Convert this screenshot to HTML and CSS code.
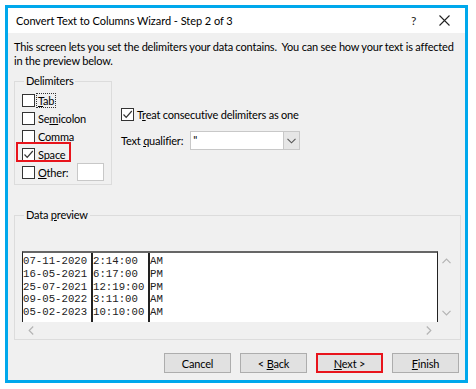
FILE: index.html
```html
<!DOCTYPE html>
<html lang="en">
  <head>
    <meta charset="UTF-8" />
    <title>Convert Text to Columns Wizard</title>
    <link rel="stylesheet" href="styles.css">
  </head>
  <body>
    <div class="dialog">
      <div class="titlebar">
        <span class="title">Convert Text to Columns Wizard - Step 2 of 3</span>
        <span class="help">?</span>
        <span class="close">
          <svg width="11" height="11" viewBox="0 0 11 11"><path d="M0.5 0.5 L10.5 10.5 M10.5 0.5 L0.5 10.5" stroke="#222" stroke-width="1.1" fill="none"/></svg>
        </span>
      </div>

      <div class="content">
        <p class="intro">This screen lets you set the delimiters your data contains.&nbsp; You can see how your text is affected<br>in the preview below.</p>

        <div class="options">
          <fieldset class="group delims">
            <legend>Delimiters</legend>
            <div class="check"><span class="box"></span><span class="focus"><u>T</u>ab</span></div>
            <div class="check"><span class="box"></span><span>Se<u>m</u>icolon</span></div>
            <div class="check"><span class="box"></span><span><u>C</u>omma</span></div>
            <div class="check marked">
              <span class="box"><svg width="11" height="11" viewBox="0 0 11 11"><path d="M1.5 5.5 L4.2 8.3 L9.8 2" stroke="#333" stroke-width="1.2" fill="none"/></svg></span>
              <span><u>S</u>pace</span>
            </div>
            <div class="check"><span class="box"></span><span><u>O</u>ther:</span><span class="other-input"></span></div>
          </fieldset>

          <div class="side">
            <div class="check">
              <span class="box"><svg width="11" height="11" viewBox="0 0 11 11"><path d="M1.5 5.5 L4.2 8.3 L9.8 2" stroke="#333" stroke-width="1.2" fill="none"/></svg></span>
              <span>T<u>r</u>eat consecutive delimiters as one</span>
            </div>
            <div class="qualifier">
              <span>Text <u>q</u>ualifier:</span>
              <div class="combo">
                <span class="combo-value">"</span>
                <span class="combo-btn"><svg width="9" height="6" viewBox="0 0 9 6"><path d="M0.5 0.8 L4.5 4.8 L8.5 0.8" stroke="#555" stroke-width="1.1" fill="none"/></svg></span>
              </div>
            </div>
          </div>
        </div>

        <fieldset class="group preview">
          <legend>Data <u>p</u>review</legend>
          <div class="preview-box">
            <div class="sheet">
              <div class="col c1">07-11-2020<br>16-05-2021<br>25-07-2021<br>09-05-2022<br>05-02-2023<br>&nbsp;</div>
              <div class="col c2">2:14:00<br>6:17:00<br>12:19:00<br>3:11:00<br>10:10:00<br>&nbsp;</div>
              <div class="col c3">AM<br>PM<br>PM<br>AM<br>AM<br>&nbsp;</div>
            </div>
            <div class="vscroll">
              <svg width="9" height="6" viewBox="0 0 9 6"><path d="M0.5 5.2 L4.5 1.2 L8.5 5.2" stroke="#b4b4b4" stroke-width="1.2" fill="none"/></svg>
              <svg width="9" height="6" viewBox="0 0 9 6"><path d="M0.5 0.8 L4.5 4.8 L8.5 0.8" stroke="#b4b4b4" stroke-width="1.2" fill="none"/></svg>
            </div>
            <div class="hscroll">
              <svg width="6" height="9" viewBox="0 0 6 9"><path d="M5.2 0.5 L1.2 4.5 L5.2 8.5" stroke="#b4b4b4" stroke-width="1.2" fill="none"/></svg>
              <svg width="6" height="9" viewBox="0 0 6 9"><path d="M0.8 0.5 L4.8 4.5 L0.8 8.5" stroke="#b4b4b4" stroke-width="1.2" fill="none"/></svg>
            </div>
          </div>
        </fieldset>

        <div class="buttons">
          <button>Cancel</button>
          <button>&lt; <u>B</u>ack</button>
          <button class="marked-btn"><u>N</u>ext &gt;</button>
          <button><u>F</u>inish</button>
        </div>
      </div>
    </div>
  </body>
</html>
```

FILE: styles.css
```css
body {
  margin: 0;
  padding: 5px;
  background: #fff;
  font-family: Lato, "Noto Sans", sans-serif;
  font-size: 11px;
  letter-spacing: -0.2px;
  color: #000;
}

.dialog {
  width: 463px;
  height: 378px;
  box-sizing: border-box;
  border: 3px solid #00a8ec;
  background: #f0f0f0;
  display: flex;
  flex-direction: column;
}

.titlebar {
  height: 25px;
  background: #fff;
  display: flex;
  align-items: center;
  padding-left: 8px;
}

.title {
  flex: 1;
  font-size: 11px;
  letter-spacing: -0.05px;
}

.help {
  width: 28px;
  font-size: 12px;
  color: #222;
}

.close {
  width: 26px;
  display: flex;
}

.content {
  padding: 0 6px;
}

.intro {
  margin: 7px 0 6px;
  line-height: 14px;
  white-space: nowrap;
}

.options {
  display: flex;
  align-items: flex-start;
}

.group {
  margin: 0;
  padding: 0;
  border: 1px solid #dcdcdc;
  min-width: 0;
}

.group legend {
  margin-left: 2px;
  padding: 0 2px;
  line-height: 14px;
}

.delims {
  width: 98px;
  box-sizing: border-box;
  padding: 3px 0 3px 7px;
}

.check {
  height: 18px;
  display: flex;
  align-items: center;
  gap: 2px;
  white-space: nowrap;
}

.box {
  width: 13px;
  height: 13px;
  box-sizing: border-box;
  border: 1px solid #333;
  background: #fff;
  display: flex;
  align-items: center;
  justify-content: center;
  margin-right: 1px;
}

.focus {
  outline: 1px dotted #333;
  outline-offset: 0;
  padding: 0 1px;
  margin-left: -1px;
}

.marked {
  position: relative;
}

.marked::before {
  content: "";
  position: absolute;
  left: -6px;
  top: -3px;
  width: 51px;
  height: 16px;
  border: 2px solid #e8141c;
}

.other-input {
  width: 25px;
  height: 16px;
  margin-left: 7px;
  border: 1px solid #c8c8c8;
  background: #fff;
}

.side {
  margin: 31px 0 0 9px;
}

.qualifier {
  margin-top: 8px;
  display: flex;
  align-items: center;
  gap: 7px;
}

.combo {
  width: 110px;
  height: 19px;
  box-sizing: border-box;
  border: 1px solid #c8c8c8;
  background: #fff;
  display: flex;
}

.combo-value {
  flex: 1;
  padding-left: 2px;
  line-height: 16px;
}

.combo-btn {
  width: 15px;
  background: #e6e6e6;
  border-left: 1px solid #c8c8c8;
  display: flex;
  align-items: center;
  justify-content: center;
}

.preview {
  margin-top: 23px;
  width: 447px;
  box-sizing: border-box;
  padding: 29px 5px 0 7px;
}

.preview-box {
  display: grid;
  grid-template-columns: 416px 17px;
  grid-template-rows: 71px 17px;
}

.sheet {
  background: #fff;
  border-top: 2px solid #666;
  border-left: 1px solid #222;
  border-right: 1px solid #222;
  display: flex;
  overflow: hidden;
  font-family: "Liberation Mono", monospace;
  font-size: 10.7px;
  line-height: 12.75px;
  letter-spacing: 0;
  color: #222;
}

.col {
  padding-top: 2px;
  white-space: nowrap;
}

.c1 {
  width: 68px;
}

.c2 {
  width: 55px;
  border-left: 2px solid #222;
}

.c3 {
  flex: 1;
  border-left: 2px solid #222;
}

.vscroll {
  display: flex;
  flex-direction: column;
  align-items: center;
  justify-content: space-between;
  padding: 7px 0 6px;
}

.hscroll {
  display: flex;
  align-items: center;
  justify-content: space-between;
  padding: 0 6px;
}

.buttons {
  margin-top: 13px;
  display: flex;
  justify-content: flex-end;
  gap: 9px;
}

button {
  width: 67px;
  height: 20px;
  box-sizing: border-box;
  border: 1px solid #adadad;
  background: #e1e1e1;
  font-family: inherit;
  font-size: 11px;
  letter-spacing: -0.2px;
  color: #000;
  padding: 0;
}

.marked-btn {
  border: 2px solid #e8141c;
}
```
